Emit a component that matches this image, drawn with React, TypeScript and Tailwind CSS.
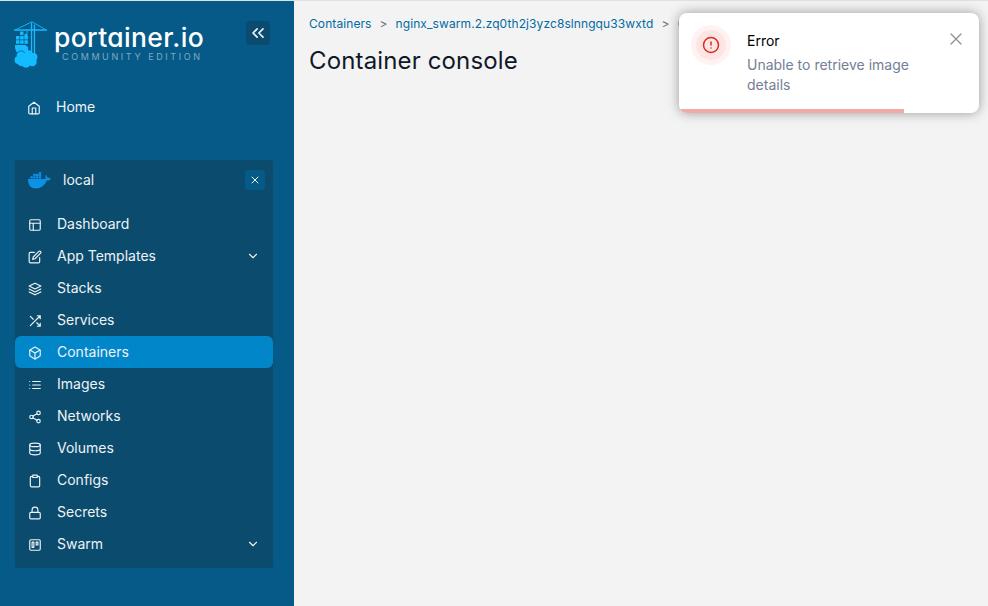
import type { ReactNode } from 'react';

function Icon({ children, className = 'size-[14px]' }: { children: ReactNode; className?: string }) {
  return (
    <svg viewBox="0 0 24 24" fill="none" stroke="currentColor" strokeWidth="2" strokeLinecap="round" strokeLinejoin="round" className={`shrink-0 ${className}`}>
      {children}
    </svg>
  );
}

const chevron = <path d="m6 9 6 6 6-6" />;
const cross = <path d="M18 6 6 18M6 6l12 12" />;

const items: { label: string; icon: ReactNode; active?: boolean; expandable?: boolean }[] = [
  { label: 'Dashboard', icon: <><rect x="3" y="3" width="18" height="18" rx="2" /><path d="M3 9h18M9 21V9" /></> },
  { label: 'App Templates', expandable: true, icon: <><path d="M11 4H4a2 2 0 0 0-2 2v14a2 2 0 0 0 2 2h14a2 2 0 0 0 2-2v-7" /><path d="M18.5 2.5a2.12 2.12 0 0 1 3 3L12 15l-4 1 1-4Z" /></> },
  { label: 'Stacks', icon: <path d="m12 2 10 5-10 5L2 7ZM2 17l10 5 10-5M2 12l10 5 10-5" /> },
  { label: 'Services', icon: <path d="M16 3h5v5M4 20 21 3M21 16v5h-5M15 15l6 6M4 4l5 5" /> },
  { label: 'Containers', active: true, icon: <><path d="M21 8a2 2 0 0 0-1-1.73l-7-4a2 2 0 0 0-2 0l-7 4A2 2 0 0 0 3 8v8a2 2 0 0 0 1 1.73l7 4a2 2 0 0 0 2 0l7-4A2 2 0 0 0 21 16Z" /><path d="m3.3 7 8.7 5 8.7-5M12 22V12" /></> },
  { label: 'Images', icon: <path d="M8 6h13M8 12h13M8 18h13M3 6h.01M3 12h.01M3 18h.01" /> },
  { label: 'Networks', icon: <><circle cx="18" cy="5" r="3" /><circle cx="6" cy="12" r="3" /><circle cx="18" cy="19" r="3" /><path d="m8.59 13.51 6.83 3.98M15.41 6.51l-6.82 3.98" /></> },
  { label: 'Volumes', icon: <><ellipse cx="12" cy="5" rx="9" ry="3" /><path d="M21 12c0 1.66-4 3-9 3s-9-1.34-9-3M3 5v14c0 1.66 4 3 9 3s9-1.34 9-3V5" /></> },
  { label: 'Configs', icon: <><path d="M16 4h2a2 2 0 0 1 2 2v14a2 2 0 0 1-2 2H6a2 2 0 0 1-2-2V6a2 2 0 0 1 2-2h2" /><rect x="8" y="2" width="8" height="4" rx="1" /></> },
  { label: 'Secrets', icon: <><rect x="3" y="11" width="18" height="11" rx="2" /><path d="M7 11V7a5 5 0 0 1 10 0v4" /></> },
  { label: 'Swarm', expandable: true, icon: <><rect x="3" y="3" width="18" height="18" rx="2" /><path d="M7 7h3v9H7ZM14 7h3v5h-3Z" /></> },
];

function CraneLogo() {
  return (
    <svg viewBox="0 0 35 48" className="h-12 w-[35px] shrink-0" fill="#14bcff">
      <path d="M1 8.300h33v1.400H1z" />
      <path d="M17.900 1.500h1.300V31h-1.300zM20.800 3.500h1.300V33h-1.300z" />
      <path d="M3 8.600 19 .8l13.500 7.800" fill="none" stroke="#14bcff" strokeWidth=".9" />
      <path d="M13.500 9.500h1V13h-1zM11.500 13h3v3.500h-3z" />
      <path d="M7 10.500h3.500V14H7zM3 15h3.500v3.500H3zM7.200 15h3.500v3.500H7.200zM11.400 15h3.500v3.500h-3.500zM3 19.300h3.500v3.500H3zM7.200 19.300h3.500v3.500H7.200zM11.400 19.300h3.500v3.500h-3.500z" />
      <path d="M2 24h10.500L15 26v5H3.500C2.400 29 1.800 26.500 2 24Z" />
      <circle cx="8" cy="34.500" r="4.600" stroke="#065a88" strokeWidth=".7" />
      <circle cx="15.500" cy="34" r="4.700" />
      <circle cx="5.500" cy="39" r="3.900" />
      <circle cx="20.500" cy="36" r="3.900" />
      <circle cx="19.500" cy="41" r="4.200" />
      <circle cx="13" cy="42" r="4.700" />
      <circle cx="8.500" cy="41" r="4" />
      <path d="M5 34h15v8H5z" />
    </svg>
  );
}

function Whale() {
  return (
    <svg viewBox="0 0 23 17" className="h-[17px] w-[23px] shrink-0" fill="#0b91e5">
      <path d="M0 7h16.500c1.500-.1 1.500-2 .7-3.500L18 3c1.200.9 1.600 2 1.500 3 1.200-.3 2.400-.1 3.300.5-.6 1.700-2.100 2.100-4 2.100C16.500 14 12.500 16.500 8 16.500 3 16.500 0 13.500 0 7Z" />
      <path d="M2.400 4.300h2.400v2.200H2.400zM5.200 4.300h2.400v2.200H5.200zM8 4.300h2.400v2.200H8zM10.800 4.300h2.400v2.200h-2.400zM5.200 1.800h2.400V4H5.200zM8 1.800h2.400V4H8zM10.800 1.800h2.400V4h-2.400zM10.800 0h2.400v1.500h-2.400z" />
    </svg>
  );
}

function Sidebar() {
  return (
    <aside className="flex w-[294px] shrink-0 flex-col bg-[#065a88] px-[15px] text-[14px] text-[#eef3f6]">
      <div className="-ml-[2px] flex h-[76px] pt-5">
        <CraneLogo />
        <div className="ml-[6px] flex flex-col text-white">
          <div className="h-[30px] text-[26.500px] leading-[33px] font-medium tracking-[0.36px] [font-feature-settings:'cv11'_1] whitespace-nowrap">portainer.io</div>
          <div className="ml-2 text-[9px] leading-[12px] tracking-[2.600px] text-[#83a8c0] whitespace-nowrap">COMMUNITY EDITION</div>
        </div>
        <button className="mr-[9px] ml-auto flex size-6 items-center justify-center rounded bg-[#0b4b70]">
          <Icon className="size-5"><path d="m11 17-5-5 5-5M18 17l-5-5 5-5" /></Icon>
        </button>
      </div>
      <a className="mt-[13px] flex h-8 items-center pl-3">
        <Icon className="mt-[3px] size-[14px]"><path d="m3 9 9-7 9 7v11a2 2 0 0 1-2 2H5a2 2 0 0 1-2-2Z" /><path d="M9 22V12h6v10" /></Icon>
        <span className="ml-[15px]">Home</span>
      </a>
      <nav className="-ml-px mt-[37px] h-[410px] w-[260px] rounded border border-dotted border-[#086594] bg-[#0b4b6d]">
        <div className="flex h-[40px] items-center pr-[8px] pl-[13px]">
          <Whale />
          <span className="ml-[12px] -mt-px">local</span>
          <button className="ml-auto flex size-5 items-center justify-center rounded bg-[#065a88]">
            <Icon className="size-3">{cross}</Icon>
          </button>
        </div>
        <ul className="mt-[8px] w-[258px]">
          {items.map((item) => (
            <li key={item.label} className={`flex h-8 items-center rounded-md pr-[13px] pl-[13px] ${item.active ? 'bg-[#0086c9]' : ''}`}>
              <Icon className="mt-[2px] size-[14px]">{item.icon}</Icon>
              <span className="-mt-px ml-[15px] pb-px">{item.label}</span>
              {item.expandable && <Icon className="ml-auto size-[14px]">{chevron}</Icon>}
            </li>
          ))}
        </ul>
      </nav>
    </aside>
  );
}

function Toast() {
  return (
    <div className="absolute top-[12px] right-[9px] flex h-[100px] w-[300px] overflow-hidden rounded-lg bg-white pt-[12px] pr-[15px] pl-[12px] text-[14px] shadow-[0_0_12px_#999]">
      <div className="flex size-10 shrink-0 items-center justify-center rounded-full bg-[#fef3f2] text-[#d92d20]">
        <div className="flex size-[30px] items-center justify-center rounded-full bg-[#fee4e2]">
          <Icon className="size-[18px]"><circle cx="12" cy="12" r="10" /><path d="M12 8v4M12 16h.01" /></Icon>
        </div>
      </div>
      <div className="ml-4 w-[185px] pt-[6px] leading-5">
        <div className="text-black">Error</div>
        <div className="mt-1 text-[#747e94]">Unable to retrieve image details</div>
      </div>
      <Icon className="mt-[6px] ml-auto size-[16px] text-[#929292]"><path d="M4.500 4.500l15 15M19.500 4.500l-15 15" /></Icon>
      <div className="absolute bottom-0 left-0 h-1 w-[225px] bg-[#f0aaa6]" />
    </div>
  );
}

export default function App() {
  return (
    <div className="flex h-[606px] w-[988px] flex-col overflow-hidden bg-[#f3f3f3] font-['Inter',sans-serif]">
      <div className="h-px shrink-0 bg-[#dde1e1]" />
      <div className="relative flex min-h-0 flex-1">
        <Sidebar />
        <main className="min-w-0 flex-1 px-[15px] pt-[14px]">
          <div className="flex items-center gap-2 text-[12px] leading-[18px] tracking-[0.09px] whitespace-nowrap text-[#026aa2]">
            <span>Containers</span><span className="text-[#667085]">&gt;</span>
            <span>nginx_swarm.2.zq0th2j3yzc8slnngqu33wxtd</span><span className="text-[#667085]">&gt;</span>
            <span className="text-[#667085]">Console</span>
          </div>
          <h1 className="mt-[12px] text-[24px] leading-8 tracking-[0.14px] text-[#101828]">Container console</h1>
        </main>
        <Toast />
      </div>
    </div>
  );
}
